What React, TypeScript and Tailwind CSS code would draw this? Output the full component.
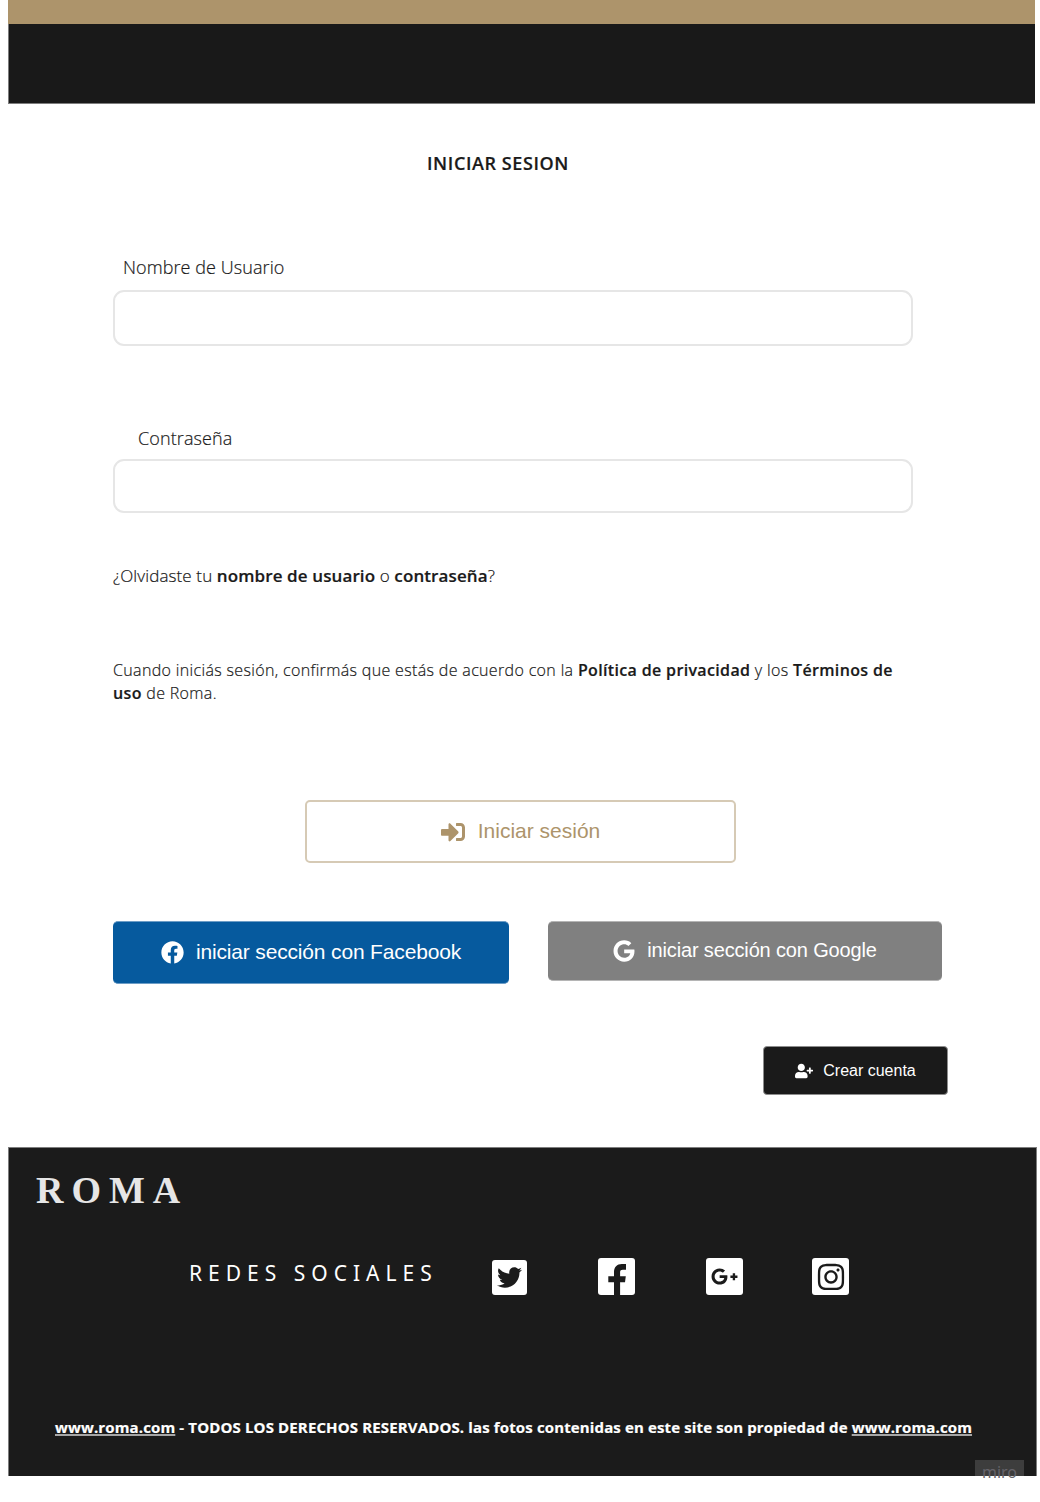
import React from "react";
import {
  FaFacebook,
  FaGoogle,
  FaGooglePlusG,
  FaInstagram,
  FaSignInAlt,
  FaTwitter,
  FaUserPlus,
} from "react-icons/fa";

function Header() {
  return (
    <header className="ml-2 w-[1027px]">
      <div className="h-6 bg-[#ad946b]" />
      <div className="h-20 border-b border-l border-[#7d7d7d] bg-[#191919]" />
    </header>
  );
}

function LoginForm() {
  return (
    <form className="ml-[113px] w-[800px] font-['Open_Sans',sans-serif] text-[#1a1a1a] [-webkit-text-stroke:0.2px_#1a1a1a]">
      <label className="ml-[10px] block h-6 text-[18px] leading-6 font-light tracking-[0.08px] whitespace-nowrap">
        Nombre de Usuario
      </label>
      <input className="mt-[11px] block h-14 w-full rounded-[11px] border-2 border-[#e6e6e6] px-4 outline-none" />
      <label className="mt-[80px] ml-[25px] block h-6 text-[18px] leading-6 font-light tracking-[0.1px] whitespace-nowrap">
        Contraseña
      </label>
      <input
        type="password"
        className="mt-[9px] block h-[54px] w-full rounded-[11px] border-2 border-[#e6e6e6] px-4 outline-none"
      />
      <p className="mt-[51px] h-6 text-[17px] leading-6 font-light tracking-[0.11px] whitespace-nowrap">
        ¿Olvidaste tu <b className="font-semibold">nombre de usuario</b> o{" "}
        <b className="font-semibold">contraseña</b>?
      </p>
      <p className="mt-[71px] h-[46px] text-[16px] leading-[23px] font-light tracking-[0.345px] whitespace-nowrap">
        Cuando iniciás sesión, confirmás que estás de acuerdo con la{" "}
        <b className="font-semibold">Política de privacidad</b> y los <b className="font-semibold">Términos de</b>
        <br />
        <b className="font-semibold">uso</b> de Roma.
      </p>
    </form>
  );
}

function Actions() {
  return (
    <section className="font-['Liberation_Sans',Arial,sans-serif]">
      <button className="mt-[95px] ml-[305px] flex h-[63px] w-[431px] items-center justify-center gap-[13px] rounded-[5px] border-2 border-[#d6cab5] text-[21px] text-[#ad946b]">
        <FaSignInAlt size={24} />
        <span className="pb-[2px] leading-6 whitespace-nowrap">Iniciar sesión</span>
      </button>
      <div className="mt-[58px] ml-[113px] flex items-start gap-[39px] text-white">
        <button className="flex h-[63px] w-[396px] items-center justify-center gap-[12px] rounded-[5px] border-y border-[#6d9dc6] bg-[#065a9e] text-[21px] tracking-[-0.16px]">
          <FaFacebook size={23} />
          <span className="pb-px leading-6 whitespace-nowrap">iniciar sección con Facebook</span>
        </button>
        <button className="flex h-[60px] w-[394px] items-center justify-center gap-[12px] rounded-[5px] border-y border-[#b5b5b5] bg-[#808080] text-[20px] tracking-[-0.15px]">
          <FaGoogle size={22} />
          <span className="pb-[2px] leading-6 whitespace-nowrap">iniciar sección con Google</span>
        </button>
      </div>
      <button className="mt-[62px] ml-[763px] flex h-[49px] w-[185px] items-center justify-center gap-[10px] rounded-[4px] border border-[#8d8d8d] bg-[#1a1a1a] text-[16px] text-white">
        <FaUserPlus size={18} />
        <span className="leading-5 whitespace-nowrap">Crear cuenta</span>
      </button>
    </section>
  );
}

function FacebookLetter() {
  return (
    <svg width="37" height="37" viewBox="0 0 37 37" fill="currentColor">
      <path d="M16 37V24.2H10.3V18.2H16V14C16 9 19 6 23.8 6H28V11.7H24.8C22.8 11.7 22.1 12.6 22.1 14.4V18.2H27.8L27 24.2H22.1V37Z" />
    </svg>
  );
}

function Footer() {
  return (
    <footer className="relative mt-[52px] ml-2 h-[329px] w-[1029px] border-t border-l border-r border-[#7d7d7d] bg-[#1b1b1b] text-white">
      <h2 className="ml-[27px] pt-[22px] font-['Liberation_Serif',serif] text-[38px] leading-10 font-bold tracking-[8px] text-[#e6e6e6]">
        ROMA
      </h2>
      <div className="mt-[47px] ml-[180px] flex h-[38px] items-start">
        <span className="w-[303px] font-['Noto_Sans',sans-serif] text-[21px] leading-[32px] tracking-[6px] whitespace-nowrap">
          REDES SOCIALES
        </span>
        <a className="mt-[3px] flex h-[35px] w-[35px] items-center justify-center rounded-[3px] bg-white text-[#1b1b1b]">
          <FaTwitter size={25} />
        </a>
        <a className="mt-px ml-[71px] flex h-[37px] w-[37px] rounded-[3px] bg-white text-[#1b1b1b]">
          <FacebookLetter />
        </a>
        <a className="mt-px ml-[71px] flex h-[37px] w-[37px] items-center justify-center rounded-[3px] bg-white text-[#1b1b1b]">
          <FaGooglePlusG size={27} />
        </a>
        <a className="mt-px ml-[69px] flex h-[37px] w-[37px] items-center justify-center rounded-[3px] bg-white text-[#1b1b1b]">
          <FaInstagram size={30} />
        </a>
      </div>
      <p className="mt-[120px] ml-[46px] font-['Open_Sans',sans-serif] text-[15px] leading-6 font-bold tracking-[0.135px] whitespace-nowrap [-webkit-text-stroke:0.2px_white]">
        <a className="underline decoration-[#a6a6a6] decoration-2 underline-offset-[1px]">www.roma.com</a>
        {" - TODOS LOS DERECHOS RESERVADOS. las fotos contenidas en este site son propiedad de "}
        <a className="underline decoration-[#a6a6a6] decoration-2 underline-offset-[1px]">www.roma.com</a>
      </p>
      <div className="absolute right-[12px] bottom-0 h-4 w-[49px] bg-[#3d3d3d] text-center font-['Noto_Sans',sans-serif] text-[16px] leading-[25px] text-[#66646a]">
        miro
      </div>
    </footer>
  );
}

export default function App() {
  return (
    <div className="h-[1502px] w-[1040px] overflow-hidden bg-white">
      <Header />
      <h1 className="mt-[47px] mb-[79px] ml-[427px] h-[25px] font-['Open_Sans',sans-serif] text-[18px] leading-[25px] font-semibold tracking-[0.6px] whitespace-nowrap text-[#1a1a1a] [-webkit-text-stroke:0.2px_#1a1a1a]">
        INICIAR SESION
      </h1>
      <LoginForm />
      <Actions />
      <Footer />
    </div>
  );
}
